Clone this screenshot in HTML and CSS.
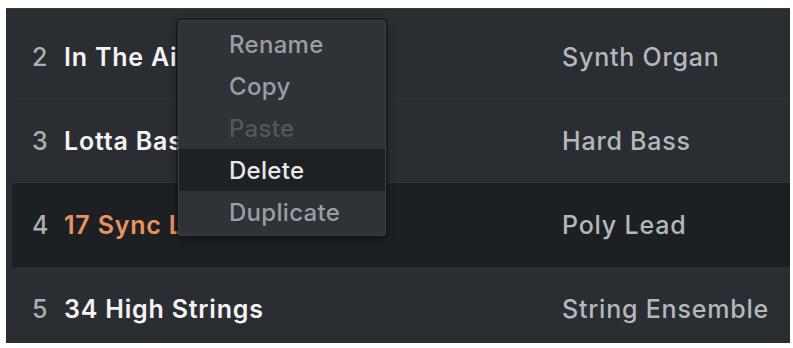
FILE: index.html
```html
<!DOCTYPE html>
<html>
<head>
<meta charset="utf-8">
<link rel="stylesheet" href="styles.css">
</head>
<body>
<div class="panel">
  <div class="list">
    <div class="row">
      <span class="num">2</span>
      <span class="name">In The Air</span>
      <span class="cat">Synth Organ</span>
    </div>
    <div class="row">
      <span class="num">3</span>
      <span class="name">Lotta Bass</span>
      <span class="cat">Hard Bass</span>
    </div>
    <div class="row selected">
      <span class="num">4</span>
      <span class="name">17 Sync Lead</span>
      <span class="cat">Poly Lead</span>
    </div>
    <div class="row">
      <span class="num">5</span>
      <span class="name">34 High Strings</span>
      <span class="cat">String Ensemble</span>
    </div>
  </div>
  <div class="menu">
    <div class="item">Rename</div>
    <div class="item">Copy</div>
    <div class="item disabled">Paste</div>
    <div class="item active">Delete</div>
    <div class="item">Duplicate</div>
  </div>
</div>
</body>
</html>
```
FILE: styles.css
```css
html, body {
  margin: 0;
  padding: 0;
  background: #ffffff;
}
body {
  font-family: Inter, "Noto Sans", sans-serif;
  padding: 8px 3px 5px 6px;
}
.panel {
  position: relative;
  width: 784px;
  height: 335px;
  background: #2a2d31;
  border-top: 1px solid #383b3f;
  box-sizing: border-box;
  overflow: hidden;
}
.list {
  display: flex;
  flex-direction: column;
  padding: 6px 0 0 6px;
}
.row {
  display: flex;
  align-items: center;
  height: 84px;
  flex: none;
  padding-left: 20px;
  box-sizing: border-box;
  border-bottom: 1px solid #303337;
  font-size: 25px;
  letter-spacing: 0.8px;
}
.row.selected {
  background: #1d2023;
  border-bottom-color: #1d2023;
}
.num {
  width: 32px;
  color: #aeb0b3;
  font-weight: 500;
}
.name {
  flex: 1;
  color: #f3f3f3;
  font-weight: 600;
  white-space: nowrap;
  overflow: hidden;
}
.row.selected .name {
  color: #e9945f;
}
.cat {
  width: 228px;
  color: #b4b7bb;
  font-weight: 500;
  white-space: nowrap;
}
.menu {
  position: absolute;
  left: 172px;
  top: 11px;
  width: 208px;
  padding: 2px 0;
  box-sizing: border-box;
  background: #2f3236;
  border: 1px solid #3b3e42;
  border-radius: 3px;
  box-shadow: 0 0 0 2px rgba(18, 20, 22, 0.55), 0 4px 10px rgba(0, 0, 0, 0.4);
  display: flex;
  flex-direction: column;
}
.item {
  height: 42px;
  display: flex;
  align-items: center;
  padding-left: 50px;
  font-size: 24px;
  letter-spacing: 0.3px;
  font-weight: 500;
  color: #9a9ea3;
}
.item.disabled {
  color: #53575c;
}
.item.active {
  background: #1e2124;
  color: #e8e8e8;
}
```
